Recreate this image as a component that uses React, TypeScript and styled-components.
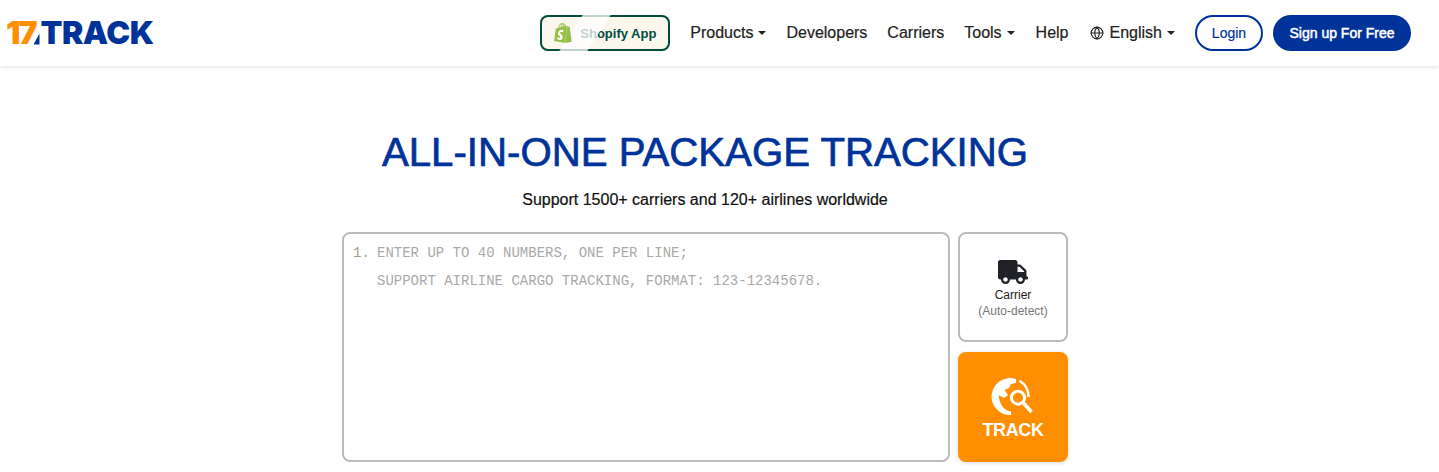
import React from "react";
import styled, { createGlobalStyle } from "styled-components";
import { FaTruck } from "react-icons/fa";
import { SiShopify } from "react-icons/si";
import { Globe } from "lucide-react";

const GlobalStyle = createGlobalStyle`
  html, body {
    margin: 0;
    padding: 0;
    height: 100%;
    overflow: hidden;
    background: #ffffff;
    font-family: "Liberation Sans", Arial, sans-serif;
  }
`;

const BLUE = "#003399";
const ORANGE = "#ff8f00";

const Header = styled.header`
  height: 66px;
  box-sizing: border-box;
  display: flex;
  align-items: center;
  justify-content: space-between;
  padding: 0 28px 0 6px;
  background: #fff;
  box-shadow: 0 1px 4px rgba(0, 0, 0, 0.12);
`;

const Logo = styled.a`
  display: flex;
  align-items: center;
  margin-top: -1px;
  font-family: Inter, "Liberation Sans", sans-serif;
  font-size: 32px;
  font-weight: 900;
  line-height: 1;
  letter-spacing: -0.5px;
`;

const LogoNumber = styled.span`
  color: ${ORANGE};
  letter-spacing: -2px;
`;

const LogoWedge = styled.span`
  align-self: flex-end;
  width: 6px;
  height: 11px;
  margin: 0 1px 4px -2px;
  background: ${BLUE};
  clip-path: polygon(100% 0, 100% 100%, 0 100%);
`;

const LogoWord = styled.span`
  color: ${BLUE};
`;

const Nav = styled.nav`
  display: flex;
  align-items: center;
`;

const ShopifyButton = styled.a`
  position: relative;
  overflow: hidden;
  width: 130px;
  height: 36px;
  box-sizing: border-box;
  display: flex;
  align-items: center;
  gap: 7px;
  padding-left: 13px;
  margin-right: 20px;
  border-radius: 8px;
  background: #fbf7ed;
  box-shadow: inset 0 0 0 2px #004c3f;
  color: #004c3f;
  font-size: 13px;
  font-weight: 700;
  white-space: nowrap;
`;

const ShopifyIcon = styled(SiShopify)`
  position: relative;
  z-index: 1;
`;

const Gleam = styled.span`
  position: absolute;
  top: 0;
  bottom: 0;
  left: 31px;
  width: 28px;
  background: rgba(255, 255, 255, 0.75);
  transform: skewX(-33deg);
`;

const NavItem = styled.a<{ $gap?: number }>`
  display: flex;
  align-items: center;
  margin-right: ${props => props.$gap ?? 20}px;
  font-size: 16px;
  color: #222222;
  white-space: nowrap;
  -webkit-text-stroke: 0.2px #222222;
`;

const Caret = styled.i`
  width: 0;
  height: 0;
  margin-left: 5px;
  border-left: 4px solid transparent;
  border-right: 4px solid transparent;
  border-top: 4px solid #222222;
`;

const GlobeIcon = styled(Globe)`
  margin-right: 6px;
`;

const LoginButton = styled.a`
  width: 68px;
  height: 36px;
  box-sizing: border-box;
  display: flex;
  align-items: center;
  justify-content: center;
  margin-right: 10px;
  border: 2px solid ${BLUE};
  border-radius: 18px;
  color: ${BLUE};
  font-size: 14px;
  -webkit-text-stroke: 0.2px ${BLUE};
`;

const SignupButton = styled.a`
  width: 138px;
  height: 36px;
  display: flex;
  align-items: center;
  justify-content: center;
  border-radius: 18px;
  background: ${BLUE};
  color: #fff;
  font-size: 14px;
  -webkit-text-stroke: 0.5px #fff;
`;

const Main = styled.main`
  display: flex;
  flex-direction: column;
  align-items: center;
  padding-right: 29px;
`;

const Title = styled.h1`
  margin: 60px 0 0;
  font-size: 40.2px;
  font-weight: 400;
  line-height: 54px;
  color: ${BLUE};
  white-space: nowrap;
  -webkit-text-stroke: 0.7px ${BLUE};
`;

const Subtitle = styled.p`
  margin: 9px 0 0;
  font-size: 16px;
  line-height: 22px;
  color: #111111;
  -webkit-text-stroke: 0.2px #111111;
`;

const TrackForm = styled.form`
  display: flex;
  gap: 8px;
  width: 726px;
  height: 230px;
  margin-top: 21px;
`;

const NumbersBox = styled.div`
  flex: 1;
  display: flex;
  box-sizing: border-box;
  padding: 5px 9px;
  border: 2px solid #bbbbbb;
  border-radius: 8px;
  font-family: "Liberation Mono", monospace;
  font-size: 14px;
  line-height: 28px;
`;

const LineNumber = styled.span`
  width: 24px;
  color: #a59a86;
`;

const NumbersInput = styled.textarea`
  flex: 1;
  padding: 0;
  border: 0;
  outline: none;
  resize: none;
  background: transparent;
  font: inherit;
  &::placeholder {
    color: #a9a9a9;
    opacity: 1;
  }
`;

const SideColumn = styled.div`
  width: 110px;
  display: flex;
  flex-direction: column;
  gap: 10px;
`;

const CarrierButton = styled.button`
  height: 110px;
  box-sizing: border-box;
  display: flex;
  flex-direction: column;
  align-items: center;
  justify-content: center;
  padding: 2px 0 0;
  border: 2px solid #bbbbbb;
  border-radius: 8px;
  background: #fff;
  font-family: inherit;
  font-size: 12px;
  line-height: 16px;
  color: #222222;
`;

const TruckIcon = styled(FaTruck)`
  color: #1f2126;
`;

const CarrierHint = styled.span`
  color: #777777;
`;

const TrackButton = styled.button`
  height: 110px;
  display: flex;
  flex-direction: column;
  align-items: center;
  justify-content: center;
  gap: 2px;
  padding: 3px 0 0;
  border: 0;
  border-radius: 8px;
  background: ${ORANGE};
  box-shadow: 0 1px 4px rgba(0, 0, 0, 0.15);
  font-family: inherit;
  font-size: 18px;
  font-weight: 700;
  letter-spacing: -0.4px;
  color: #fff;
`;

const TrackIcon = () => (
  <svg width="44" height="42" viewBox="0 0 44 42" fill="none">
    <path d="M25 3A18.500 18.500 0 1 0 20 39L20 35.500C14 35 9 30 7.500 19L13 22L17 19L13.500 14L18 12L20 8L25 7Z" fill="#fff" />
    <path d="M28.500 4.700A18.500 18.500 0 0 1 37.500 21" stroke="#fff" strokeWidth="2.500" />
    <circle cx="27" cy="21.700" r="6.500" stroke="#fff" strokeWidth="3" fill={ORANGE} />
    <path d="M32.500 27L40.500 36" stroke="#fff" strokeWidth="3.500" />
  </svg>
);

export default function App() {
  return (
    <>
      <GlobalStyle />
      <Header>
        <Logo>
          <LogoNumber>17</LogoNumber>
          <LogoWedge />
          <LogoWord>TRACK</LogoWord>
        </Logo>
        <Nav>
          <ShopifyButton>
            <ShopifyIcon size={20} color="#95bf47" />
            Shopify App
            <Gleam />
          </ShopifyButton>
          <NavItem>Products<Caret /></NavItem>
          <NavItem>Developers</NavItem>
          <NavItem>Carriers</NavItem>
          <NavItem $gap={21}>Tools<Caret /></NavItem>
          <NavItem $gap={21}>Help</NavItem>
          <NavItem><GlobeIcon size={14} />English<Caret /></NavItem>
          <LoginButton>Login</LoginButton>
          <SignupButton>Sign up For Free</SignupButton>
        </Nav>
      </Header>
      <Main>
        <Title>ALL-IN-ONE PACKAGE TRACKING</Title>
        <Subtitle>Support 1500+ carriers and 120+ airlines worldwide</Subtitle>
        <TrackForm>
          <NumbersBox>
            <LineNumber>1.</LineNumber>
            <NumbersInput placeholder={"ENTER UP TO 40 NUMBERS, ONE PER LINE;\nSUPPORT AIRLINE CARGO TRACKING, FORMAT: 123-12345678."} />
          </NumbersBox>
          <SideColumn>
            <CarrierButton type="button">
              <TruckIcon size={30} />
              Carrier
              <CarrierHint>(Auto-detect)</CarrierHint>
            </CarrierButton>
            <TrackButton type="button">
              <TrackIcon />
              TRACK
            </TrackButton>
          </SideColumn>
        </TrackForm>
      </Main>
    </>
  );
}
